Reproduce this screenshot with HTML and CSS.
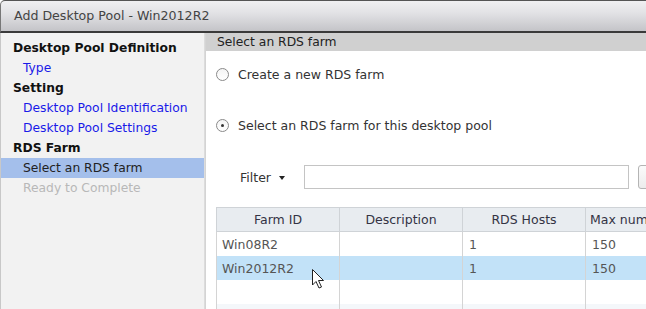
FILE: index.html
```html
<!DOCTYPE html>
<html lang="en">
<head>
    <meta charset="UTF-8">
    <title>Add Desktop Pool - Win2012R2</title>
    <link rel="stylesheet" href="styles.css">
</head>
<body>
    <div class="window">
        <div class="titlebar">Add Desktop Pool - Win2012R2</div>
        <div class="window-body">
            <ul class="steps">
                <li class="group">Desktop Pool Definition</li>
                <li class="step">Type</li>
                <li class="group">Setting</li>
                <li class="step">Desktop Pool Identification</li>
                <li class="step">Desktop Pool Settings</li>
                <li class="group">RDS Farm</li>
                <li class="step current">Select an RDS farm</li>
                <li class="step disabled">Ready to Complete</li>
            </ul>
            <div class="panel">
                <div class="panel-head">Select an RDS farm</div>
                <div class="panel-body">
                    <label class="radio-row first">
                        <span class="radio"></span>
                        Create a new RDS farm
                    </label>
                    <label class="radio-row second">
                        <span class="radio checked"></span>
                        Select an RDS farm for this desktop pool
                    </label>
                    <div class="filter-row">
                        <span class="filter-label">Filter <span class="caret"></span></span>
                        <input type="text" class="filter-input">
                        <span class="filter-btn"></span>
                    </div>
                    <table class="farms">
                        <thead>
                            <tr>
                                <th class="c1">Farm ID</th>
                                <th class="c2">Description</th>
                                <th class="c3">RDS Hosts</th>
                                <th class="c4">Max number of connections</th>
                            </tr>
                        </thead>
                        <tbody>
                            <tr><td>Win08R2</td><td></td><td>1</td><td>150</td></tr>
                            <tr class="selected"><td>Win2012R2</td><td></td><td>1</td><td>150</td></tr>
                            <tr><td></td><td></td><td></td><td></td></tr>
                            <tr class="alt"><td></td><td></td><td></td><td></td></tr>
                        </tbody>
                    </table>
                </div>
            </div>
        </div>
        <svg class="cursor" width="14" height="22" viewBox="0 0 14 22">
            <path d="M1.5 1.5 L1.5 17 L5 13.5 L8 20 L10.5 19 L7.5 12.5 L12.5 12.5 Z" fill="#fff" stroke="#222" stroke-width="1" stroke-linejoin="round"/>
        </svg>
    </div>
</body>
</html>
```

FILE: styles.css
```css
html, body {
    margin: 0;
    padding: 0;
    background: #fff;
}
body {
    font-family: "DejaVu Sans", Verdana, sans-serif;
    font-size: 12.3px;
    color: #333;
}
.window {
    position: relative;
    width: 646px;
    height: 309px;
    overflow: hidden;
    display: flex;
    flex-direction: column;
}
.titlebar {
    flex-shrink: 0;
    height: 33px;
    box-sizing: border-box;
    padding: 0 0 0 13px;
    line-height: 30px;
    font-size: 12.6px;
    color: #444;
    background: linear-gradient(#f0f0f2, #e2e2e5 40%, #c4c4c8);
    border-top: 1px solid #555;
    border-left: 1px solid #777;
    border-top-left-radius: 5px;
    border-bottom: 2px solid #3a3a3a;
}
.window-body {
    flex: 1;
    display: flex;
    min-height: 0;
}
.steps {
    flex-shrink: 0;
    list-style: none;
    margin: 0;
    padding: 5px 0 0 0;
    width: 205px;
    background: #f2f2f2;
    border-left: 1px solid #c8c8c8;
    border-right: 1px solid #dcdcdc;
    box-sizing: border-box;
}
.steps li {
    height: 20px;
    line-height: 20px;
    padding-left: 12px;
    white-space: nowrap;
}
.steps .group {
    font-weight: bold;
    color: #111;
}
.steps .step {
    padding-left: 22px;
    color: #1a1ae8;
}
.steps .current {
    background: #a4bfeb;
    color: #222;
}
.steps .disabled {
    color: #b8b8b8;
}
.panel {
    flex: 1;
    min-width: 0;
    display: flex;
    flex-direction: column;
    border-left: 1px solid #d4d4d4;
}
.panel-head {
    height: 19px;
    line-height: 18px;
    padding-left: 11px;
    background: #d0d0d0;
    color: #222;
}
.panel-body {
    flex: 1;
    padding: 0 0 0 10px;
    background: #fff;
}
.radio-row {
    display: flex;
    align-items: center;
    gap: 9px;
    color: #333;
    font-size: 12.5px;
}
.radio-row.first {
    margin-top: 16px;
}
.radio-row.second {
    margin-top: 36px;
}
.radio {
    width: 11px;
    height: 11px;
    border: 1px solid #8a8a8a;
    border-radius: 50%;
    background: linear-gradient(#f4f4f4, #fff);
    position: relative;
}
.radio.checked::after {
    content: '';
    position: absolute;
    left: 4px;
    top: 4px;
    width: 3px;
    height: 3px;
    border-radius: 50%;
    background: #333;
}
.filter-row {
    display: flex;
    align-items: center;
    margin-top: 32px;
    padding-left: 24px;
}
.filter-label {
    flex-shrink: 0;
    white-space: nowrap;
    color: #333;
    width: 64px;
    font-size: 12.5px;
}
.caret {
    display: inline-block;
    margin-left: 4px;
    vertical-align: middle;
    border-left: 3.5px solid transparent;
    border-right: 3.5px solid transparent;
    border-top: 4px solid #222;
}
.filter-input {
    flex-shrink: 0;
    width: 325px;
    height: 24px;
    box-sizing: border-box;
    border: 1px solid #c4c4c4;
    margin: 0;
    padding: 0;
}
.filter-btn {
    flex-shrink: 0;
    margin-left: 9px;
    width: 30px;
    height: 24px;
    box-sizing: border-box;
    border: 1px solid #b4b4b4;
    border-radius: 3px;
    background: linear-gradient(#fbfbfb, #ececec);
}
.farms {
    margin-top: 18px;
    border-collapse: collapse;
    table-layout: fixed;
    width: 500px;
    font-size: 12.5px;
}
.farms th {
    height: 23px;
    background: #e8ecf0;
    border: 1px solid #cfd3d7;
    font-weight: normal;
    color: #334;
    white-space: nowrap;
    overflow: hidden;
    padding: 0;
}
.farms th.c4 {
    text-align: left;
    padding-left: 4px;
}
.c1, .c2, .c3 {
    width: 122px;
}
.farms td {
    height: 24px;
    border-left: 1px solid #d4d4d4;
    border-right: 1px solid #d4d4d4;
    padding: 0 0 0 6px;
    color: #555;
}
.farms td:first-child {
    padding-left: 5px;
}
.farms tr.selected td {
    background: #c2e2f8;
}
.farms tr.alt td {
    background: #f4f7fa;
}
.cursor {
    position: absolute;
    left: 311px;
    top: 268px;
}
```
